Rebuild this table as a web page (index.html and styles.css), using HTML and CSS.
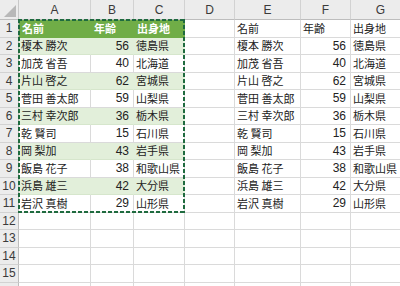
FILE: index.html
```html
<!DOCTYPE html>
<html lang="ja">
<head>
<meta charset="utf-8">
<title>Sheet</title>
<link rel="stylesheet" href="styles.css">
</head>
<body>
<div class="sheet">
  <div class="corner"><span class="tri"></span></div>
  <div class="ch">A</div><div class="ch">B</div><div class="ch">C</div><div class="ch">D</div><div class="ch">E</div><div class="ch">F</div><div class="ch">G</div><div class="ch"></div>

  <div class="rh">1</div><div class="c th">名前</div><div class="c th">年齢</div><div class="c th">出身地</div><div class="c"></div><div class="c">名前</div><div class="c">年齢</div><div class="c">出身地</div><div class="c"></div>
  <div class="rh">2</div><div class="c band">榎本 勝次</div><div class="c band num">56</div><div class="c band">徳島県</div><div class="c"></div><div class="c">榎本 勝次</div><div class="c num">56</div><div class="c">徳島県</div><div class="c"></div>
  <div class="rh">3</div><div class="c">加茂 省吾</div><div class="c num">40</div><div class="c">北海道</div><div class="c"></div><div class="c">加茂 省吾</div><div class="c num">40</div><div class="c">北海道</div><div class="c"></div>
  <div class="rh">4</div><div class="c band">片山 啓之</div><div class="c band num">62</div><div class="c band">宮城県</div><div class="c"></div><div class="c">片山 啓之</div><div class="c num">62</div><div class="c">宮城県</div><div class="c"></div>
  <div class="rh">5</div><div class="c">菅田 善太郎</div><div class="c num">59</div><div class="c">山梨県</div><div class="c"></div><div class="c">菅田 善太郎</div><div class="c num">59</div><div class="c">山梨県</div><div class="c"></div>
  <div class="rh">6</div><div class="c band">三村 幸次郎</div><div class="c band num">36</div><div class="c band">栃木県</div><div class="c"></div><div class="c">三村 幸次郎</div><div class="c num">36</div><div class="c">栃木県</div><div class="c"></div>
  <div class="rh">7</div><div class="c">乾 賢司</div><div class="c num">15</div><div class="c">石川県</div><div class="c"></div><div class="c">乾 賢司</div><div class="c num">15</div><div class="c">石川県</div><div class="c"></div>
  <div class="rh">8</div><div class="c band">岡 梨加</div><div class="c band num">43</div><div class="c band">岩手県</div><div class="c"></div><div class="c">岡 梨加</div><div class="c num">43</div><div class="c">岩手県</div><div class="c"></div>
  <div class="rh">9</div><div class="c">飯島 花子</div><div class="c num">38</div><div class="c">和歌山県</div><div class="c"></div><div class="c">飯島 花子</div><div class="c num">38</div><div class="c">和歌山県</div><div class="c"></div>
  <div class="rh">10</div><div class="c band">浜島 雄三</div><div class="c band num">42</div><div class="c band">大分県</div><div class="c"></div><div class="c">浜島 雄三</div><div class="c num">42</div><div class="c">大分県</div><div class="c"></div>
  <div class="rh">11</div><div class="c">岩沢 真樹</div><div class="c num">29</div><div class="c">山形県</div><div class="c"></div><div class="c">岩沢 真樹</div><div class="c num">29</div><div class="c">山形県</div><div class="c"></div>
  <div class="rh">12</div><div class="c"></div><div class="c"></div><div class="c"></div><div class="c"></div><div class="c"></div><div class="c"></div><div class="c"></div><div class="c"></div>
  <div class="rh">13</div><div class="c"></div><div class="c"></div><div class="c"></div><div class="c"></div><div class="c"></div><div class="c"></div><div class="c"></div><div class="c"></div>
  <div class="rh">14</div><div class="c"></div><div class="c"></div><div class="c"></div><div class="c"></div><div class="c"></div><div class="c"></div><div class="c"></div><div class="c"></div>
  <div class="rh">15</div><div class="c"></div><div class="c"></div><div class="c"></div><div class="c"></div><div class="c"></div><div class="c"></div><div class="c"></div><div class="c"></div>
  <div class="rh"></div><div class="c"></div><div class="c"></div><div class="c"></div><div class="c"></div><div class="c"></div><div class="c"></div><div class="c"></div><div class="c"></div>

  <div class="marquee"></div>
</div>
</body>
</html>
```
FILE: styles.css
```css
html, body {
  margin: 0;
  padding: 0;
  background: #ffffff;
  overflow: hidden;
}
.sheet {
  position: relative;
  display: grid;
  grid-template-columns: 19px 72px 43px 51px 50px 66px 50px 60px 60px;
  grid-template-rows: 20px repeat(16, 17.5px);
  font-family: "Noto Sans CJK JP", "Noto Sans", sans-serif;
  font-size: 11px;
  color: #222222;
}
.corner {
  background: #ececec;
  border-right: 1px solid #c8c8c8;
  border-bottom: 1px solid #bdbdbd;
  box-sizing: border-box;
  position: relative;
}
.tri {
  position: absolute;
  right: 2px;
  bottom: 2px;
  width: 0;
  height: 0;
  border-left: 12px solid transparent;
  border-bottom: 12px solid #b8b8b8;
}
.ch {
  background: #ececec;
  border-right: 1px solid #d2d2d2;
  border-bottom: 1px solid #bdbdbd;
  box-sizing: border-box;
  display: flex;
  align-items: center;
  justify-content: center;
  font-family: "Liberation Sans", Arial, sans-serif;
  font-size: 12px;
  color: #3a3a3a;
  padding-top: 1px;
}
.rh {
  background: #ececec;
  border-right: 1px solid #bdbdbd;
  border-bottom: 1px solid #d2d2d2;
  box-sizing: border-box;
  display: flex;
  align-items: center;
  justify-content: center;
  font-family: "Liberation Sans", Arial, sans-serif;
  font-size: 12px;
  color: #3a3a3a;
}
.c {
  border-right: 1px solid #dadada;
  border-bottom: 1px solid #dadada;
  box-sizing: border-box;
  display: flex;
  align-items: center;
  padding: 0 3px 0 2px;
  white-space: nowrap;
  line-height: 1;
}
.num {
  justify-content: flex-end;
  padding-right: 4px;
  font-family: "Liberation Sans", "Noto Sans CJK JP", sans-serif;
  font-size: 12px;
}
.th {
  background: #70ad47;
  border-color: #70ad47;
  color: #ffffff;
  font-weight: bold;
  padding-left: 3px;
}
.band {
  background: #e2efda;
  border-right-color: #e2efda;
  border-bottom-color: #d6e6cc;
}
.marquee {
  position: absolute;
  grid-column: 2 / 5;
  grid-row: 2 / 13;
  top: -1px;
  left: -1px;
  right: 0;
  bottom: 0;
  pointer-events: none;
  background:
    repeating-linear-gradient(90deg, #1f6b3f 0 4px, transparent 4px 6px) top left / 100% 2px no-repeat,
    repeating-linear-gradient(90deg, #1f6b3f 0 4px, transparent 4px 6px) bottom left / 100% 2px no-repeat,
    repeating-linear-gradient(180deg, #1f6b3f 0 4px, transparent 4px 6px) top left / 2px 100% no-repeat,
    repeating-linear-gradient(180deg, #1f6b3f 0 4px, transparent 4px 6px) top right / 2px 100% no-repeat;
}
```
